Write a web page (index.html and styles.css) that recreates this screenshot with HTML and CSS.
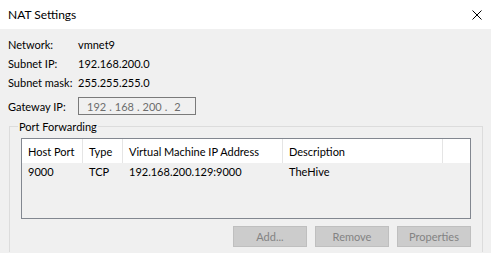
FILE: index.html
```html
<!DOCTYPE html>
<html lang="en">

<head>
    <meta charset="UTF-8">
    <meta name="viewport" content="width=device-width, initial-scale=1.0">
    <title>NAT Settings</title>
    <link rel="stylesheet" href="styles.css">
</head>

<body>
    <!-- Title bar -->
    <div class="titlebar">
        <span class="title">NAT Settings</span>
        <svg class="close" width="10" height="10" viewBox="0 0 10 10">
            <path d="M0.5 0.5 L9.5 9.5 M9.5 0.5 L0.5 9.5" stroke="#000" stroke-width="1" fill="none" />
        </svg>
    </div>

    <div class="content">
        <div class="info">
            <div class="info-row"><span class="label">Network:</span><span class="value">vmnet9</span></div>
            <div class="info-row"><span class="label">Subnet IP:</span><span class="value">192.168.200.0</span></div>
            <div class="info-row"><span class="label">Subnet mask:</span><span class="value">255.255.255.0</span></div>
            <div class="info-row gateway">
                <span class="label">Gateway IP:</span>
                <div class="ip-box">
                    <span class="octet">192</span><span class="dot">.</span>
                    <span class="octet">168</span><span class="dot">.</span>
                    <span class="octet">200</span><span class="dot">.</span>
                    <span class="octet last">2</span>
                </div>
            </div>
        </div>

        <!-- Port Forwarding group -->
        <fieldset class="group">
            <legend>Port Forwarding</legend>
            <div class="listview">
                <div class="lv-header">
                    <div class="col c1">Host Port</div>
                    <div class="col c2">Type</div>
                    <div class="col c3">Virtual Machine IP Address</div>
                    <div class="col c4">Description</div>
                    <div class="col fill"></div>
                </div>
                <div class="lv-row">
                    <div class="col c1">9000</div>
                    <div class="col c2">TCP</div>
                    <div class="col c3">192.168.200.129:9000</div>
                    <div class="col c4">TheHive</div>
                </div>
            </div>
            <div class="buttons">
                <button class="btn">Add...</button>
                <button class="btn">Remove</button>
                <button class="btn">Properties</button>
            </div>
        </fieldset>
    </div>
</body>

</html>
```

FILE: styles.css
```css
html,
body {
    height: 253px;
    overflow: hidden;
}

body {
    margin: 0;
    background-color: #f0f0f0;
    font-family: Lato, sans-serif;
    font-size: 11px;
    color: #000;
}

.titlebar {
    height: 29px;
    background-color: #fff;
    display: flex;
    align-items: center;
    justify-content: space-between;
    padding: 0 9px 0 8px;
    font-size: 12px;
}

.title {
    line-height: 16px;
}

.close {
    display: block;
}

.content {
    padding-top: 6px;
}

.info {
    padding-left: 8px;
}

.info-row {
    display: flex;
    align-items: center;
    height: 19px;
}

.label {
    width: 70px;
    flex-shrink: 0;
    white-space: nowrap;
}

.gateway {
    margin-top: 5px;
    height: 18px;
}

.ip-box {
    box-sizing: border-box;
    width: 118px;
    height: 18px;
    border: 1px solid #7a7a7a;
    color: #6d6d6d;
    display: flex;
    align-items: center;
    padding-left: 8px;
    gap: 3px;
}

.octet.last {
    padding-left: 4px;
}

.group {
    margin: 4px 8px 0 9px;
    padding: 4px 11px 5px 11px;
    border: 1px solid #dcdcdc;
    border-bottom: none;
}

.group legend {
    padding: 0 1px;
    margin-left: -3px;
    line-height: 15px;
}

.listview {
    box-sizing: border-box;
    height: 81px;
    border: 1px solid #828790;
    background-color: #f0f0f0;
}

.lv-header {
    display: flex;
    height: 24px;
    background-color: #fff;
}

.lv-header .col {
    border-right: 1px solid #e5e5e5;
    display: flex;
    align-items: center;
}

.lv-header .col.fill {
    border-right: none;
    flex: 1;
}

.lv-row {
    display: flex;
    height: 17px;
    align-items: center;
}

.col {
    box-sizing: border-box;
    padding-left: 6px;
    white-space: nowrap;
}

.c1 {
    width: 61px;
}

.c2 {
    width: 40px;
}

.c3 {
    width: 160px;
}

.c4 {
    width: 160px;
}

.buttons {
    display: flex;
    justify-content: flex-end;
    gap: 8px;
    margin-top: 7px;
}

.btn {
    box-sizing: border-box;
    width: 74px;
    height: 21px;
    background-color: #cccccc;
    border: 1px solid #bfbfbf;
    color: #838383;
    font-family: Lato, sans-serif;
    font-size: 11px;
    padding: 0;
}
```
